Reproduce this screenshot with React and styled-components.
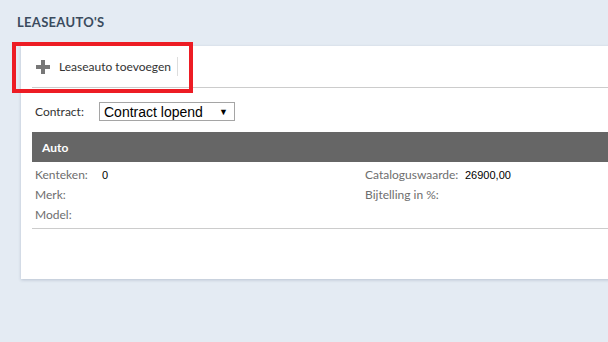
import React from "react";
import styled, { createGlobalStyle } from "styled-components";

const GlobalStyle = createGlobalStyle`
  html, body {
    margin: 0;
    padding: 0;
    background: #e4ebf3;
    overflow: hidden;
  }
  body {
    font-family: Lato, "Open Sans", sans-serif;
  }
`;

const Page = styled.div`
  position: relative;
  width: 608px;
  height: 342px;
  padding: 15px 0 0 17px;
  box-sizing: border-box;
  overflow: hidden;
`;

const Title = styled.h1`
  margin: 0;
  font-size: 13px;
  line-height: 15px;
  font-weight: 700;
  letter-spacing: 0.3px;
  color: #3b4b5e;
`;

const Card = styled.div`
  margin: 16px 0 0 4px;
  width: 640px;
  padding: 0 0 50px 11px;
  background: #fff;
  box-shadow: 0 1px 3px rgba(60, 80, 110, 0.25);
`;

const Toolbar = styled.div`
  display: flex;
  align-items: center;
  height: 41px;
  padding-left: 4px;
  border-bottom: 1px solid #cccccc;
`;

const ToolButton = styled.div`
  display: flex;
  align-items: center;
  gap: 9px;
  font-size: 12px;
  color: #333;
`;

const Separator = styled.span`
  width: 1px;
  height: 19px;
  margin-left: 6px;
  background: #dddddd;
`;

const ContractRow = styled.div`
  display: flex;
  align-items: center;
  margin-top: 14px;
  padding-left: 3px;
`;

const FieldLabel = styled.span`
  width: ${(p) => p.$w}px;
  font-size: 12px;
  color: ${(p) => (p.$dark ? "#333" : "#6e6e6e")};
  flex-shrink: 0;
`;

const SelectBox = styled.div`
  display: flex;
  align-items: center;
  justify-content: space-between;
  box-sizing: border-box;
  width: 136px;
  height: 19px;
  padding: 0 6px 0 4px;
  border: 1px solid #a5a5a5;
  font-family: "Liberation Sans", Arial, sans-serif;
  font-size: 14px;
  color: #000;
  span {
    font-size: 9px;
  }
`;

const SectionBar = styled.div`
  margin-top: 11px;
  height: 30px;
  display: flex;
  align-items: center;
  padding-left: 10px;
  background: #666666;
  color: #fff;
  font-size: 12px;
  font-weight: 700;
`;

const Details = styled.div`
  display: flex;
  padding: 2px 0 4px 3px;
  border-bottom: 1px solid #cccccc;
`;

const Column = styled.div`
  width: ${(p) => p.$w || "auto"};
`;

const Row = styled.div`
  display: flex;
  align-items: center;
  height: 20px;
`;

const Value = styled.span`
  font-family: "Liberation Sans", Arial, sans-serif;
  font-size: 11px;
  color: #000;
  padding-top: 2px;
`;

const Highlight = styled.div`
  position: absolute;
  left: 12px;
  top: 42px;
  width: 181px;
  height: 51px;
  box-sizing: border-box;
  border: 4px solid #ed1c24;
  pointer-events: none;
`;

const PlusIcon = () => (
  <svg width="14" height="14" viewBox="0 0 14 14">
    <rect x="5" y="0" width="4" height="14" fill="#777" />
    <rect x="0" y="5" width="14" height="4" fill="#777" />
  </svg>
);

export default function App() {
  return (
    <>
      <GlobalStyle />
      <Page>
        <Title>LEASEAUTO'S</Title>
        <Card>
          <Toolbar>
            <ToolButton>
              <PlusIcon />
              Leaseauto toevoegen
            </ToolButton>
            <Separator />
          </Toolbar>
          <ContractRow>
            <FieldLabel $w={64} $dark>Contract:</FieldLabel>
            <SelectBox>
              Contract lopend
              <span>▼</span>
            </SelectBox>
          </ContractRow>
          <SectionBar>Auto</SectionBar>
          <Details>
            <Column $w="330px">
              <Row>
                <FieldLabel $w={67}>Kenteken:</FieldLabel>
                <Value>0</Value>
              </Row>
              <Row>
                <FieldLabel $w={67}>Merk:</FieldLabel>
              </Row>
              <Row>
                <FieldLabel $w={67}>Model:</FieldLabel>
              </Row>
            </Column>
            <Column>
              <Row>
                <FieldLabel $w={100}>Cataloguswaarde:</FieldLabel>
                <Value>26900,00</Value>
              </Row>
              <Row>
                <FieldLabel $w={100}>Bijtelling in %:</FieldLabel>
              </Row>
            </Column>
          </Details>
        </Card>
        <Highlight />
      </Page>
    </>
  );
}
